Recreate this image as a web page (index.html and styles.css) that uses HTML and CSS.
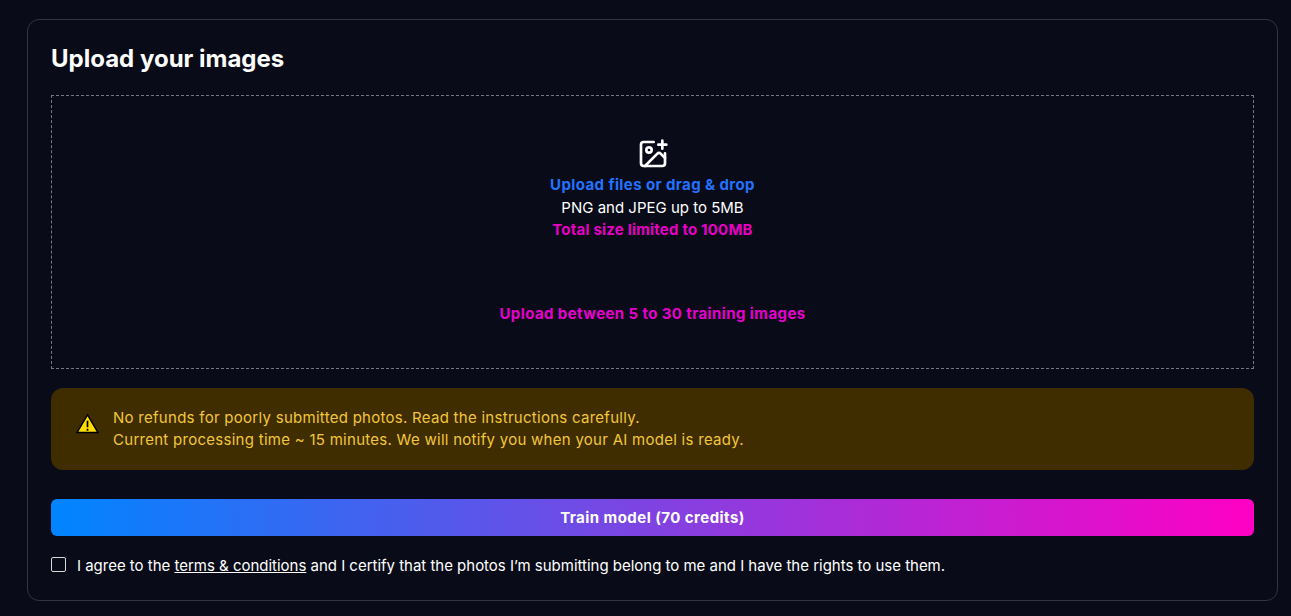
FILE: index.html
```html
<!doctype html>
<html lang="en-us">
<head>
    <title>Train model</title>
    <link rel="stylesheet" href="styles.css">
</head>
<body>
    <div class="card">
        <h2 class="card-title">Upload your images</h2>

        <div class="dropzone">
            <svg class="upload-icon" viewBox="0 0 24 24" fill="none" stroke="currentColor" stroke-width="2" stroke-linecap="round" stroke-linejoin="round">
                <path d="M16 5h6"/>
                <path d="M19 2v6"/>
                <path d="M21 11.5V19a2 2 0 0 1-2 2H5a2 2 0 0 1-2-2V5a2 2 0 0 1 2-2h7.5"/>
                <path d="m21 15-3.086-3.086a2 2 0 0 0-2.828 0L6 21"/>
                <circle cx="9" cy="9" r="2"/>
            </svg>
            <div class="drop-link">Upload files or drag &amp; drop</div>
            <div class="drop-hint">PNG and JPEG up to 5MB</div>
            <div class="drop-limit">Total size limited to 100MB</div>
            <div class="drop-count">Upload between 5 to 30 training images</div>
        </div>

        <div class="alert">
            <svg class="alert-icon" viewBox="0 0 24 22">
                <path d="M12 2 23 20.5H1Z" fill="#ffdd00" stroke="#000" stroke-width="1.5" stroke-linejoin="miter"/>
                <path d="M12 8v7M12 16.5v2" fill="none" stroke="#000" stroke-width="1.8"/>
            </svg>
            <div class="alert-text">
                <div>No refunds for poorly submitted photos. Read the instructions carefully.</div>
                <div>Current processing time ~ 15 minutes. We will notify you when your AI model is ready.</div>
            </div>
        </div>

        <button class="train-btn">Train model (70 credits)</button>

        <label class="agree">
            <span class="agree-box"></span>
            <span>I agree to the <a class="agree-link" href="#">terms &amp; conditions</a> and I certify that the photos I’m submitting belong to me and I have the rights to use them.</span>
        </label>
    </div>
</body>
</html>
```

FILE: styles.css
```css
/* General styles */
html, body {
    height: 616px;
    overflow: hidden;
}

body {
    margin: 0;
    padding: 19px 13px 0 27px;
    box-sizing: border-box;
    background-color: #090b18;
    color: #fff;
    font-family: Inter, "Liberation Sans", sans-serif;
    font-size: 15px;
}

.card {
    height: 582px;
    box-sizing: border-box;
    padding: 24px 23px 0;
    border: 1px solid #33363f;
    border-radius: 12px;
}

.card-title {
    margin: 0 0 21px;
    font-size: 24px;
    line-height: 30px;
    font-weight: 700;
}

/* Drop area */
.dropzone {
    height: 274px;
    box-sizing: border-box;
    padding-top: 42px;
    border: 1px dashed #777a82;
    display: flex;
    flex-direction: column;
    align-items: center;
    text-align: center;
}

.upload-icon {
    width: 32px;
    height: 32px;
    display: block;
}

.drop-link, .drop-hint, .drop-limit {
    line-height: 22px;
}

.drop-link {
    color: #2272ff;
    font-weight: 700;
    letter-spacing: 0.4px;
    margin-top: 4px;
}

.drop-hint {
    margin-top: 1px;
}

.drop-limit {
    color: #e600c4;
    font-weight: 700;
    letter-spacing: 0.2px;
}

.drop-count {
    color: #e600cc;
    font-weight: 700;
    letter-spacing: 0.4px;
    line-height: 22px;
    margin-top: 62px;
}

/* Warning */
.alert {
    margin-top: 19px;
    height: 82px;
    box-sizing: border-box;
    padding: 0 24px 0 25px;
    border-radius: 12px;
    background-color: #3f2d00;
    color: #f2c63c;
    display: flex;
    align-items: center;
    gap: 14px;
}

.alert-icon {
    width: 23px;
    height: 21px;
    margin-bottom: 12px;
    flex: none;
}

.alert-text {
    line-height: 22px;
    letter-spacing: 0.275px;
}

.train-btn {
    display: block;
    width: 100%;
    height: 37px;
    margin-top: 29px;
    border: none;
    border-radius: 6px;
    background: linear-gradient(90deg, #0085ff, #ff00c4);
    color: #fff;
    font-family: inherit;
    font-size: 15px;
    font-weight: 700;
    letter-spacing: 0.45px;
}

/* Terms */
.agree {
    margin-top: 19px;
    display: flex;
    align-items: flex-start;
    gap: 11px;
    line-height: 22px;
    letter-spacing: -0.015px;
}

.agree-box {
    width: 13px;
    height: 13px;
    margin-top: 2px;
    border: 1px solid #d8d8d8;
    border-radius: 2px;
    flex: none;
}

.agree-link {
    color: #fff;
    text-decoration: underline;
}
```
